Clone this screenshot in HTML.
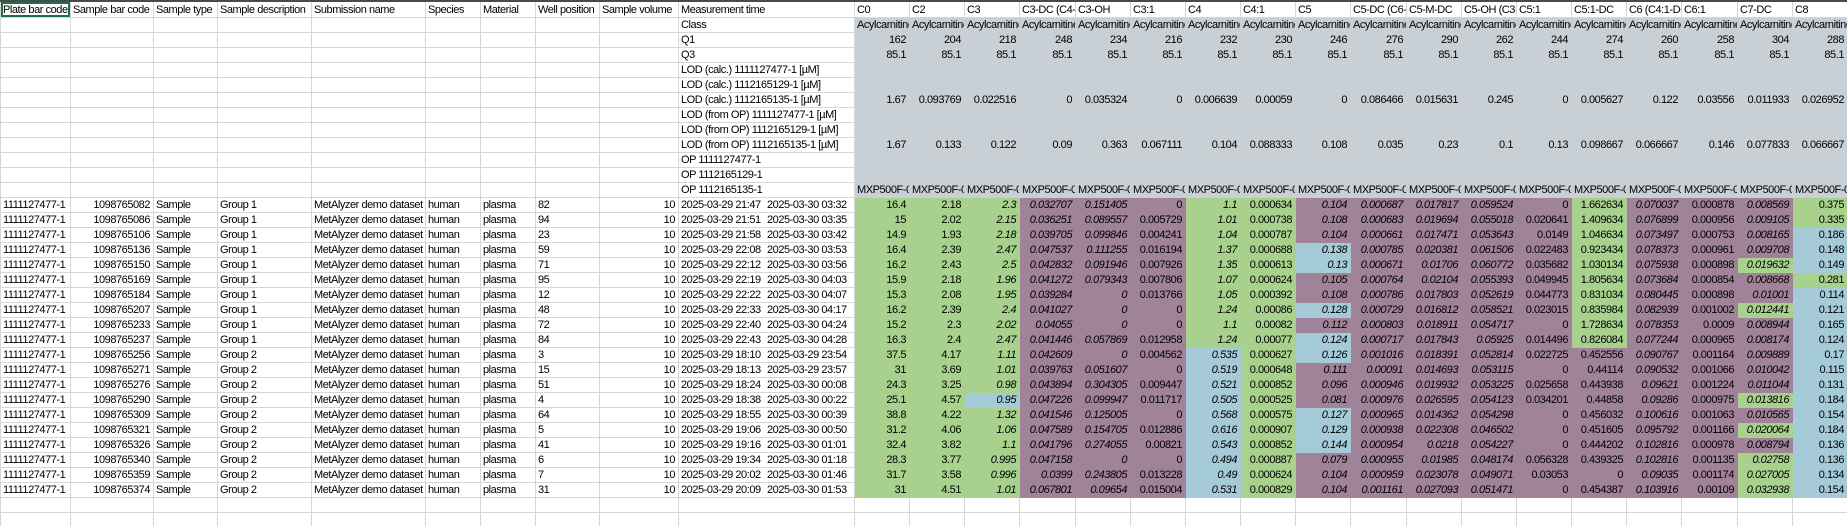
<!DOCTYPE html>
<html><head><meta charset="utf-8"><style>
html,body{margin:0;padding:0;background:#fff;width:1847px;height:526px;overflow:hidden}
table{border-collapse:collapse;table-layout:fixed;width:1847px;border-top:2px solid #4a4a4a}
td{height:14px;border:1px solid #d6d6d6;padding:0 3px 0 2px;font:11px "Liberation Sans",sans-serif;letter-spacing:-0.45px;white-space:nowrap;overflow:hidden;text-align:right;line-height:14px;color:#000}
tr.h td{height:15px;text-align:left}
td.l{text-align:left}
tr.m td:nth-child(n+11){background:#c8cfd5;border-color:#c8cfd5}
tr.m td:nth-child(10){text-align:left}
tr.d td:nth-child(-n+10){text-align:left}
tr.d td:nth-child(2),tr.d td:nth-child(9){text-align:right}
tr.d td:nth-child(n+11){background:#a08399;border-color:#a08399}
tr.d td:nth-child(11),tr.d td:nth-child(12),tr.d td:nth-child(13),tr.d td:nth-child(17),tr.d td:nth-child(18),tr.d td:nth-child(24){background:#a9d18e;border-color:#a9d18e}
tr.d td:nth-child(28){background:#a6cbd8;border-color:#a6cbd8}
tr.d.r2 td:nth-child(17){background:#a6cbd8;border-color:#a6cbd8}
tr.d.r2 td:nth-child(24){background:#a08399;border-color:#a08399}
tr.d td:nth-child(13),tr.d td:nth-child(14),tr.d td:nth-child(15),tr.d td:nth-child(17),tr.d td:nth-child(19),tr.d td:nth-child(20),tr.d td:nth-child(21),tr.d td:nth-child(22),tr.d td:nth-child(25),tr.d td:nth-child(27){font-style:italic}
tr.d td.g{background:#a9d18e;border-color:#a9d18e}
tr.d td.b{background:#a6cbd8;border-color:#a6cbd8}
tr.d td.p{background:#a08399;border-color:#a08399}
.t1{display:inline-block;width:86px}
.sel{box-shadow:inset 0 0 0 2px #1e7145;position:relative}
</style></head><body>
<table>
<colgroup><col style="width:70px"><col style="width:83px"><col style="width:64px"><col style="width:94px"><col style="width:114px"><col style="width:55px"><col style="width:55px"><col style="width:64px"><col style="width:79px"><col style="width:176px">
<col style="width:55px"><col style="width:55px"><col style="width:55px"><col style="width:56px"><col style="width:55px"><col style="width:55px"><col style="width:55px"><col style="width:55px"><col style="width:55px"><col style="width:56px"><col style="width:55px"><col style="width:55px"><col style="width:55px"><col style="width:55px"><col style="width:55px"><col style="width:56px"><col style="width:55px"><col style="width:55px"></colgroup>
<tr class="h"><td class="sel">Plate bar code</td><td>Sample bar code</td><td>Sample type</td><td>Sample description</td><td>Submission name</td><td>Species</td><td>Material</td><td>Well position</td><td>Sample volume</td><td>Measurement time</td><td>C0</td><td>C2</td><td>C3</td><td>C3-DC (C4-OH)</td><td>C3-OH</td><td>C3:1</td><td>C4</td><td>C4:1</td><td>C5</td><td>C5-DC (C6-OH)</td><td>C5-M-DC</td><td>C5-OH (C3-DC-M)</td><td>C5:1</td><td>C5:1-DC</td><td>C6 (C4:1-DC)</td><td>C6:1</td><td>C7-DC</td><td>C8</td></tr>
<tr class="m"><td></td><td></td><td></td><td></td><td></td><td></td><td></td><td></td><td></td><td>Class</td><td class="l">Acylcarnitines</td><td class="l">Acylcarnitines</td><td class="l">Acylcarnitines</td><td class="l">Acylcarnitines</td><td class="l">Acylcarnitines</td><td class="l">Acylcarnitines</td><td class="l">Acylcarnitines</td><td class="l">Acylcarnitines</td><td class="l">Acylcarnitines</td><td class="l">Acylcarnitines</td><td class="l">Acylcarnitines</td><td class="l">Acylcarnitines</td><td class="l">Acylcarnitines</td><td class="l">Acylcarnitines</td><td class="l">Acylcarnitines</td><td class="l">Acylcarnitines</td><td class="l">Acylcarnitines</td><td class="l">Acylcarnitines</td></tr>
<tr class="m"><td></td><td></td><td></td><td></td><td></td><td></td><td></td><td></td><td></td><td>Q1</td><td>162</td><td>204</td><td>218</td><td>248</td><td>234</td><td>216</td><td>232</td><td>230</td><td>246</td><td>276</td><td>290</td><td>262</td><td>244</td><td>274</td><td>260</td><td>258</td><td>304</td><td>288</td></tr>
<tr class="m"><td></td><td></td><td></td><td></td><td></td><td></td><td></td><td></td><td></td><td>Q3</td><td>85.1</td><td>85.1</td><td>85.1</td><td>85.1</td><td>85.1</td><td>85.1</td><td>85.1</td><td>85.1</td><td>85.1</td><td>85.1</td><td>85.1</td><td>85.1</td><td>85.1</td><td>85.1</td><td>85.1</td><td>85.1</td><td>85.1</td><td>85.1</td></tr>
<tr class="m"><td></td><td></td><td></td><td></td><td></td><td></td><td></td><td></td><td></td><td>LOD (calc.) 1111127477-1 [µM]</td><td></td><td></td><td></td><td></td><td></td><td></td><td></td><td></td><td></td><td></td><td></td><td></td><td></td><td></td><td></td><td></td><td></td><td></td></tr>
<tr class="m"><td></td><td></td><td></td><td></td><td></td><td></td><td></td><td></td><td></td><td>LOD (calc.) 1112165129-1 [µM]</td><td></td><td></td><td></td><td></td><td></td><td></td><td></td><td></td><td></td><td></td><td></td><td></td><td></td><td></td><td></td><td></td><td></td><td></td></tr>
<tr class="m"><td></td><td></td><td></td><td></td><td></td><td></td><td></td><td></td><td></td><td>LOD (calc.) 1112165135-1 [µM]</td><td>1.67</td><td>0.093769</td><td>0.022516</td><td>0</td><td>0.035324</td><td>0</td><td>0.006639</td><td>0.00059</td><td>0</td><td>0.086466</td><td>0.015631</td><td>0.245</td><td>0</td><td>0.005627</td><td>0.122</td><td>0.03556</td><td>0.011933</td><td>0.026952</td></tr>
<tr class="m"><td></td><td></td><td></td><td></td><td></td><td></td><td></td><td></td><td></td><td>LOD (from OP) 1111127477-1 [µM]</td><td></td><td></td><td></td><td></td><td></td><td></td><td></td><td></td><td></td><td></td><td></td><td></td><td></td><td></td><td></td><td></td><td></td><td></td></tr>
<tr class="m"><td></td><td></td><td></td><td></td><td></td><td></td><td></td><td></td><td></td><td>LOD (from OP) 1112165129-1 [µM]</td><td></td><td></td><td></td><td></td><td></td><td></td><td></td><td></td><td></td><td></td><td></td><td></td><td></td><td></td><td></td><td></td><td></td><td></td></tr>
<tr class="m"><td></td><td></td><td></td><td></td><td></td><td></td><td></td><td></td><td></td><td>LOD (from OP) 1112165135-1 [µM]</td><td>1.67</td><td>0.133</td><td>0.122</td><td>0.09</td><td>0.363</td><td>0.067111</td><td>0.104</td><td>0.088333</td><td>0.108</td><td>0.035</td><td>0.23</td><td>0.1</td><td>0.13</td><td>0.098667</td><td>0.066667</td><td>0.146</td><td>0.077833</td><td>0.066667</td></tr>
<tr class="m"><td></td><td></td><td></td><td></td><td></td><td></td><td></td><td></td><td></td><td>OP 1111127477-1</td><td></td><td></td><td></td><td></td><td></td><td></td><td></td><td></td><td></td><td></td><td></td><td></td><td></td><td></td><td></td><td></td><td></td><td></td></tr>
<tr class="m"><td></td><td></td><td></td><td></td><td></td><td></td><td></td><td></td><td></td><td>OP 1112165129-1</td><td></td><td></td><td></td><td></td><td></td><td></td><td></td><td></td><td></td><td></td><td></td><td></td><td></td><td></td><td></td><td></td><td></td><td></td></tr>
<tr class="m"><td></td><td></td><td></td><td></td><td></td><td></td><td></td><td></td><td></td><td>OP 1112165135-1</td><td class="l">MXP500F-04</td><td class="l">MXP500F-04</td><td class="l">MXP500F-04</td><td class="l">MXP500F-04</td><td class="l">MXP500F-04</td><td class="l">MXP500F-04</td><td class="l">MXP500F-04</td><td class="l">MXP500F-04</td><td class="l">MXP500F-04</td><td class="l">MXP500F-04</td><td class="l">MXP500F-04</td><td class="l">MXP500F-04</td><td class="l">MXP500F-04</td><td class="l">MXP500F-04</td><td class="l">MXP500F-04</td><td class="l">MXP500F-04</td><td class="l">MXP500F-04</td><td class="l">MXP500F-04</td></tr>
<tr class="d"><td>1111127477-1</td><td>1098765082</td><td>Sample</td><td>Group 1</td><td>MetAlyzer demo dataset</td><td>human</td><td>plasma</td><td>82</td><td>10</td><td><span class="t1">2025-03-29 21:47</span>2025-03-30 03:32</td><td>16.4</td><td>2.18</td><td>2.3</td><td>0.032707</td><td>0.151405</td><td>0</td><td>1.1</td><td>0.000634</td><td>0.104</td><td>0.000687</td><td>0.017817</td><td>0.059524</td><td>0</td><td>1.662634</td><td>0.070037</td><td>0.000878</td><td>0.008569</td><td class="g">0.375</td></tr>
<tr class="d"><td>1111127477-1</td><td>1098765086</td><td>Sample</td><td>Group 1</td><td>MetAlyzer demo dataset</td><td>human</td><td>plasma</td><td>94</td><td>10</td><td><span class="t1">2025-03-29 21:51</span>2025-03-30 03:35</td><td>15</td><td>2.02</td><td>2.15</td><td>0.036251</td><td>0.089557</td><td>0.005729</td><td>1.01</td><td>0.000738</td><td>0.108</td><td>0.000683</td><td>0.019694</td><td>0.055018</td><td>0.020641</td><td>1.409634</td><td>0.076899</td><td>0.000956</td><td>0.009105</td><td class="g">0.335</td></tr>
<tr class="d"><td>1111127477-1</td><td>1098765106</td><td>Sample</td><td>Group 1</td><td>MetAlyzer demo dataset</td><td>human</td><td>plasma</td><td>23</td><td>10</td><td><span class="t1">2025-03-29 21:58</span>2025-03-30 03:42</td><td>14.9</td><td>1.93</td><td>2.18</td><td>0.039705</td><td>0.099846</td><td>0.004241</td><td>1.04</td><td>0.000787</td><td>0.104</td><td>0.000661</td><td>0.017471</td><td>0.053643</td><td>0.0149</td><td>1.046634</td><td>0.073497</td><td>0.000753</td><td>0.008165</td><td>0.186</td></tr>
<tr class="d"><td>1111127477-1</td><td>1098765136</td><td>Sample</td><td>Group 1</td><td>MetAlyzer demo dataset</td><td>human</td><td>plasma</td><td>59</td><td>10</td><td><span class="t1">2025-03-29 22:08</span>2025-03-30 03:53</td><td>16.4</td><td>2.39</td><td>2.47</td><td>0.047537</td><td>0.111255</td><td>0.016194</td><td>1.37</td><td>0.000688</td><td class="b">0.138</td><td>0.000785</td><td>0.020381</td><td>0.061506</td><td>0.022483</td><td>0.923434</td><td>0.078373</td><td>0.000961</td><td>0.009708</td><td>0.148</td></tr>
<tr class="d"><td>1111127477-1</td><td>1098765150</td><td>Sample</td><td>Group 1</td><td>MetAlyzer demo dataset</td><td>human</td><td>plasma</td><td>71</td><td>10</td><td><span class="t1">2025-03-29 22:12</span>2025-03-30 03:56</td><td>16.2</td><td>2.43</td><td>2.5</td><td>0.042832</td><td>0.091946</td><td>0.007926</td><td>1.35</td><td>0.000613</td><td class="b">0.13</td><td>0.000671</td><td>0.01706</td><td>0.060772</td><td>0.035682</td><td>1.030134</td><td>0.075938</td><td>0.000898</td><td class="g">0.019632</td><td>0.149</td></tr>
<tr class="d"><td>1111127477-1</td><td>1098765169</td><td>Sample</td><td>Group 1</td><td>MetAlyzer demo dataset</td><td>human</td><td>plasma</td><td>95</td><td>10</td><td><span class="t1">2025-03-29 22:19</span>2025-03-30 04:03</td><td>15.9</td><td>2.18</td><td>1.96</td><td>0.041272</td><td>0.079343</td><td>0.007806</td><td>1.07</td><td>0.000624</td><td>0.105</td><td>0.000764</td><td>0.02104</td><td>0.055393</td><td>0.049945</td><td>1.805634</td><td>0.073684</td><td>0.000854</td><td>0.008668</td><td class="g">0.281</td></tr>
<tr class="d"><td>1111127477-1</td><td>1098765184</td><td>Sample</td><td>Group 1</td><td>MetAlyzer demo dataset</td><td>human</td><td>plasma</td><td>12</td><td>10</td><td><span class="t1">2025-03-29 22:22</span>2025-03-30 04:07</td><td>15.3</td><td>2.08</td><td>1.95</td><td>0.039284</td><td>0</td><td>0.013766</td><td>1.05</td><td>0.000392</td><td>0.108</td><td>0.000786</td><td>0.017803</td><td>0.052619</td><td>0.044773</td><td>0.831034</td><td>0.080445</td><td>0.000898</td><td>0.01001</td><td>0.114</td></tr>
<tr class="d"><td>1111127477-1</td><td>1098765207</td><td>Sample</td><td>Group 1</td><td>MetAlyzer demo dataset</td><td>human</td><td>plasma</td><td>48</td><td>10</td><td><span class="t1">2025-03-29 22:33</span>2025-03-30 04:17</td><td>16.2</td><td>2.39</td><td>2.4</td><td>0.041027</td><td>0</td><td>0</td><td>1.24</td><td>0.00086</td><td class="b">0.128</td><td>0.000729</td><td>0.016812</td><td>0.058521</td><td>0.023015</td><td>0.835984</td><td>0.082939</td><td>0.001002</td><td class="g">0.012441</td><td>0.121</td></tr>
<tr class="d"><td>1111127477-1</td><td>1098765233</td><td>Sample</td><td>Group 1</td><td>MetAlyzer demo dataset</td><td>human</td><td>plasma</td><td>72</td><td>10</td><td><span class="t1">2025-03-29 22:40</span>2025-03-30 04:24</td><td>15.2</td><td>2.3</td><td>2.02</td><td>0.04055</td><td>0</td><td>0</td><td>1.1</td><td>0.00082</td><td>0.112</td><td>0.000803</td><td>0.018911</td><td>0.054717</td><td>0</td><td>1.728634</td><td>0.078353</td><td>0.0009</td><td>0.008944</td><td>0.165</td></tr>
<tr class="d"><td>1111127477-1</td><td>1098765237</td><td>Sample</td><td>Group 1</td><td>MetAlyzer demo dataset</td><td>human</td><td>plasma</td><td>84</td><td>10</td><td><span class="t1">2025-03-29 22:43</span>2025-03-30 04:28</td><td>16.3</td><td>2.4</td><td>2.47</td><td>0.041446</td><td>0.057869</td><td>0.012958</td><td>1.24</td><td>0.00077</td><td class="b">0.124</td><td>0.000717</td><td>0.017843</td><td>0.05925</td><td>0.014496</td><td>0.826084</td><td>0.077244</td><td>0.000965</td><td>0.008174</td><td>0.124</td></tr>
<tr class="d r2"><td>1111127477-1</td><td>1098765256</td><td>Sample</td><td>Group 2</td><td>MetAlyzer demo dataset</td><td>human</td><td>plasma</td><td>3</td><td>10</td><td><span class="t1">2025-03-29 18:10</span>2025-03-29 23:54</td><td>37.5</td><td>4.17</td><td>1.11</td><td>0.042609</td><td>0</td><td>0.004562</td><td>0.535</td><td>0.000627</td><td class="b">0.126</td><td>0.001016</td><td>0.018391</td><td>0.052814</td><td>0.022725</td><td>0.452556</td><td>0.090767</td><td>0.001164</td><td>0.009889</td><td>0.17</td></tr>
<tr class="d r2"><td>1111127477-1</td><td>1098765271</td><td>Sample</td><td>Group 2</td><td>MetAlyzer demo dataset</td><td>human</td><td>plasma</td><td>15</td><td>10</td><td><span class="t1">2025-03-29 18:13</span>2025-03-29 23:57</td><td>31</td><td>3.69</td><td>1.01</td><td>0.039763</td><td>0.051607</td><td>0</td><td>0.519</td><td>0.000648</td><td>0.111</td><td>0.00091</td><td>0.014693</td><td>0.053115</td><td>0</td><td>0.44114</td><td>0.090532</td><td>0.001066</td><td>0.010042</td><td>0.115</td></tr>
<tr class="d r2"><td>1111127477-1</td><td>1098765276</td><td>Sample</td><td>Group 2</td><td>MetAlyzer demo dataset</td><td>human</td><td>plasma</td><td>51</td><td>10</td><td><span class="t1">2025-03-29 18:24</span>2025-03-30 00:08</td><td>24.3</td><td>3.25</td><td>0.98</td><td>0.043894</td><td>0.304305</td><td>0.009447</td><td>0.521</td><td>0.000852</td><td>0.096</td><td>0.000946</td><td>0.019932</td><td>0.053225</td><td>0.025658</td><td>0.443938</td><td>0.09621</td><td>0.001224</td><td>0.011044</td><td>0.131</td></tr>
<tr class="d r2"><td>1111127477-1</td><td>1098765290</td><td>Sample</td><td>Group 2</td><td>MetAlyzer demo dataset</td><td>human</td><td>plasma</td><td>4</td><td>10</td><td><span class="t1">2025-03-29 18:38</span>2025-03-30 00:22</td><td>25.1</td><td>4.57</td><td class="b">0.95</td><td>0.047226</td><td>0.099947</td><td>0.011717</td><td>0.505</td><td>0.000525</td><td>0.081</td><td>0.000976</td><td>0.026595</td><td>0.054123</td><td>0.034201</td><td>0.44858</td><td>0.09286</td><td>0.000975</td><td class="g">0.013816</td><td>0.184</td></tr>
<tr class="d r2"><td>1111127477-1</td><td>1098765309</td><td>Sample</td><td>Group 2</td><td>MetAlyzer demo dataset</td><td>human</td><td>plasma</td><td>64</td><td>10</td><td><span class="t1">2025-03-29 18:55</span>2025-03-30 00:39</td><td>38.8</td><td>4.22</td><td>1.32</td><td>0.041546</td><td>0.125005</td><td>0</td><td>0.568</td><td>0.000575</td><td class="b">0.127</td><td>0.000965</td><td>0.014362</td><td>0.054298</td><td>0</td><td class="g">0.456032</td><td>0.100616</td><td>0.001063</td><td>0.010565</td><td>0.154</td></tr>
<tr class="d r2"><td>1111127477-1</td><td>1098765321</td><td>Sample</td><td>Group 2</td><td>MetAlyzer demo dataset</td><td>human</td><td>plasma</td><td>5</td><td>10</td><td><span class="t1">2025-03-29 19:06</span>2025-03-30 00:50</td><td>31.2</td><td>4.06</td><td>1.06</td><td>0.047589</td><td>0.154705</td><td>0.012886</td><td>0.616</td><td>0.000907</td><td class="b">0.129</td><td>0.000938</td><td>0.022308</td><td>0.046502</td><td>0</td><td>0.451605</td><td>0.095792</td><td>0.001166</td><td class="g">0.020064</td><td>0.184</td></tr>
<tr class="d r2"><td>1111127477-1</td><td>1098765326</td><td>Sample</td><td>Group 2</td><td>MetAlyzer demo dataset</td><td>human</td><td>plasma</td><td>41</td><td>10</td><td><span class="t1">2025-03-29 19:16</span>2025-03-30 01:01</td><td>32.4</td><td>3.82</td><td>1.1</td><td>0.041796</td><td>0.274055</td><td>0.00821</td><td>0.543</td><td>0.000852</td><td class="b">0.144</td><td>0.000954</td><td>0.0218</td><td>0.054227</td><td>0</td><td>0.444202</td><td>0.102816</td><td>0.000978</td><td>0.008794</td><td>0.136</td></tr>
<tr class="d r2"><td>1111127477-1</td><td>1098765340</td><td>Sample</td><td>Group 2</td><td>MetAlyzer demo dataset</td><td>human</td><td>plasma</td><td>6</td><td>10</td><td><span class="t1">2025-03-29 19:34</span>2025-03-30 01:18</td><td>28.3</td><td>3.77</td><td>0.995</td><td>0.047158</td><td>0</td><td>0</td><td>0.494</td><td>0.000887</td><td>0.079</td><td>0.000955</td><td>0.01985</td><td>0.048174</td><td>0.056328</td><td>0.439325</td><td>0.102816</td><td>0.001135</td><td class="g">0.02758</td><td>0.136</td></tr>
<tr class="d r2"><td>1111127477-1</td><td>1098765359</td><td>Sample</td><td>Group 2</td><td>MetAlyzer demo dataset</td><td>human</td><td>plasma</td><td>7</td><td>10</td><td><span class="t1">2025-03-29 20:02</span>2025-03-30 01:46</td><td>31.7</td><td>3.58</td><td>0.996</td><td>0.0399</td><td>0.243805</td><td>0.013228</td><td>0.49</td><td>0.000624</td><td>0.104</td><td>0.000959</td><td>0.023078</td><td>0.049071</td><td>0.03053</td><td>0</td><td>0.09035</td><td>0.001174</td><td class="g">0.027005</td><td>0.134</td></tr>
<tr class="d r2"><td>1111127477-1</td><td>1098765374</td><td>Sample</td><td>Group 2</td><td>MetAlyzer demo dataset</td><td>human</td><td>plasma</td><td>31</td><td>10</td><td><span class="t1">2025-03-29 20:09</span>2025-03-30 01:53</td><td>31</td><td>4.51</td><td>1.01</td><td>0.067801</td><td>0.09654</td><td>0.015004</td><td>0.531</td><td>0.000829</td><td>0.104</td><td>0.001161</td><td>0.027093</td><td>0.051471</td><td>0</td><td>0.454387</td><td>0.103916</td><td>0.00109</td><td class="g">0.032938</td><td>0.154</td></tr>
<tr><td></td><td></td><td></td><td></td><td></td><td></td><td></td><td></td><td></td><td></td><td></td><td></td><td></td><td></td><td></td><td></td><td></td><td></td><td></td><td></td><td></td><td></td><td></td><td></td><td></td><td></td><td></td><td></td></tr>
<tr><td></td><td></td><td></td><td></td><td></td><td></td><td></td><td></td><td></td><td></td><td></td><td></td><td></td><td></td><td></td><td></td><td></td><td></td><td></td><td></td><td></td><td></td><td></td><td></td><td></td><td></td><td></td><td></td></tr>
</table>
</body></html>
